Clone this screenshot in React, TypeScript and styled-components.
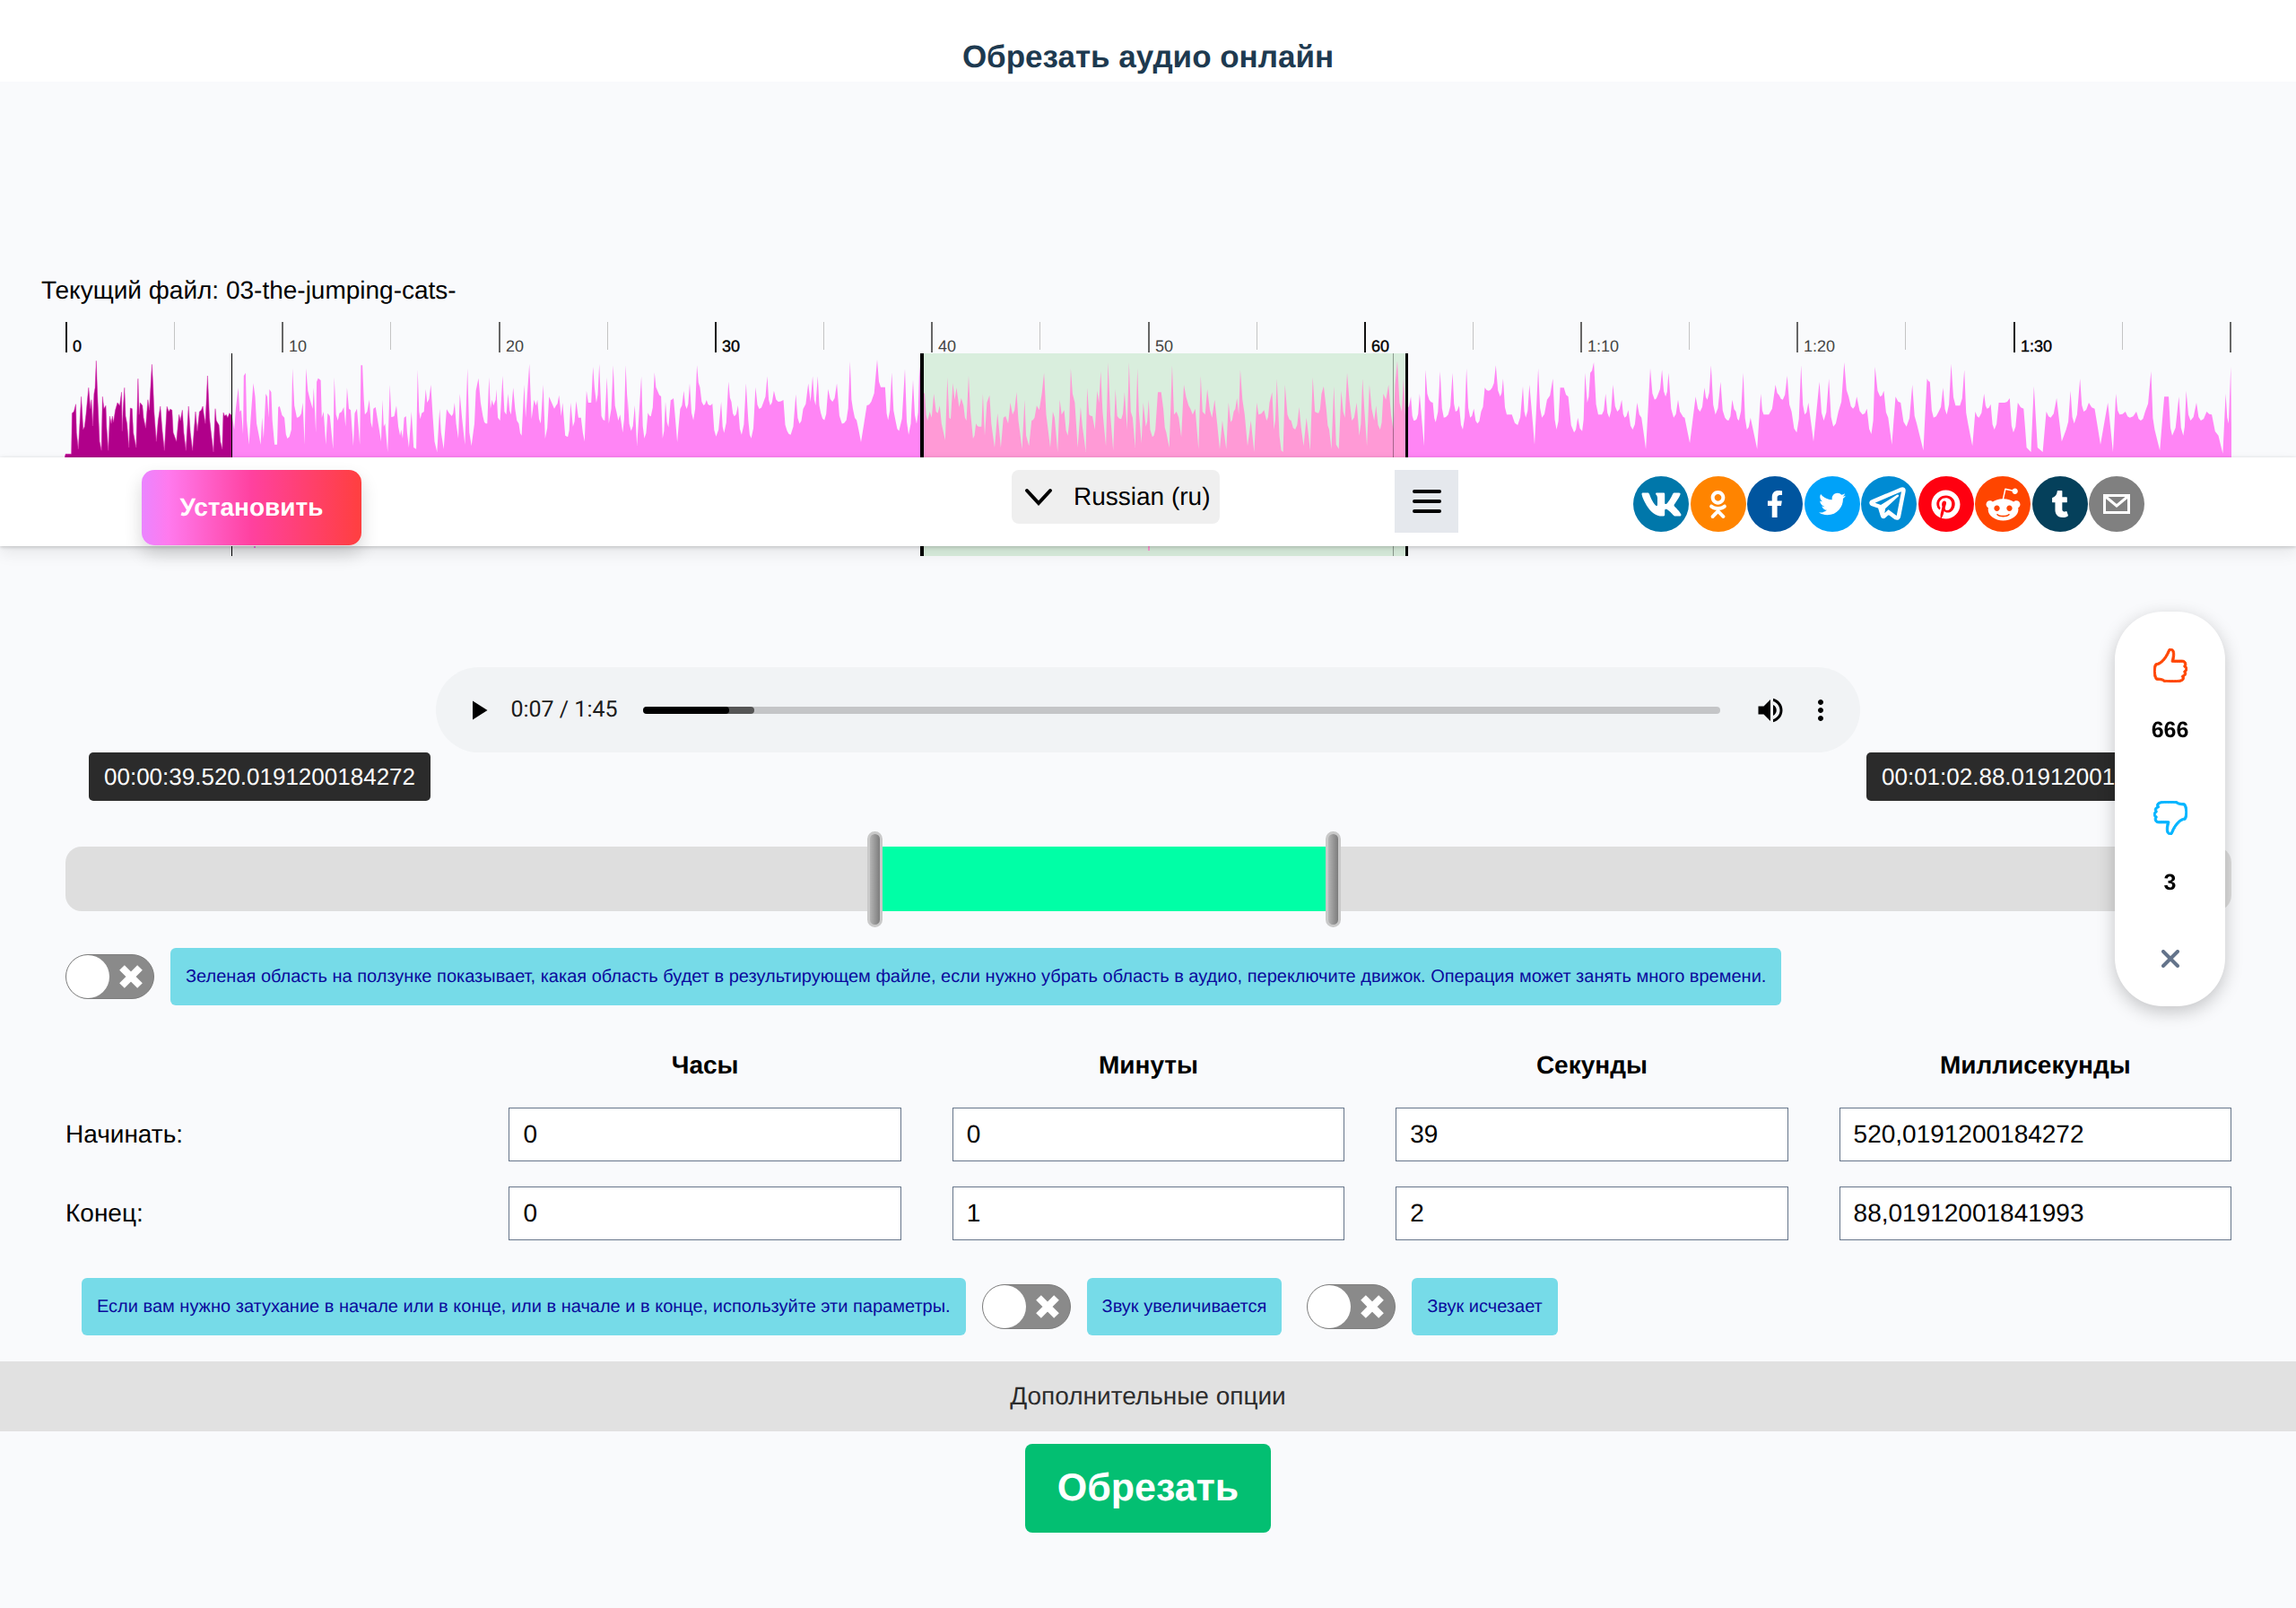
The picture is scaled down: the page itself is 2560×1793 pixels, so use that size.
import React from 'react';
import styled, { createGlobalStyle, css } from 'styled-components';
import { FaVk, FaOdnoklassniki, FaFacebookF, FaTwitter, FaPinterest, FaRedditAlien, FaTumblr } from 'react-icons/fa';
import { LiaTelegramPlane } from 'react-icons/lia';
import { MdVolumeUp, MdMoreVert, MdPlayArrow } from 'react-icons/md';
import { SlLike, SlDislike } from 'react-icons/sl';

const GlobalStyle = createGlobalStyle`
  *, *::before, *::after { box-sizing: border-box; }
  body {
    margin: 0;
    background: #f9fafc;
    color: #000;
    font-family: "Liberation Sans", Arial, sans-serif;
    font-size: 28px;
    line-height: 32px;
    text-rendering: geometricPrecision;
  }
  button, input, select { font: inherit; color: inherit; text-rendering: inherit; }
  button { cursor: pointer; }
`;

const Page = styled.div`
  padding-bottom: 82px;
`;

const TitleBar = styled.header`
  background: #fff;
  padding: 44px 24px 7px;
  text-align: center;
`;

const Title = styled.h1`
  margin: 0;
  font-size: 35px;
  line-height: 40px;
  color: #1e3a50;
`;

const FileName = styled.p`
  margin: 0;
  padding: 217px 46px 19px;
`;

const Ruler = styled.div`
  height: 35px;
  margin: 0 72px;
`;

const RulerSvg = styled.svg`
  display: block;
  width: 100%;
  height: 100%;
  overflow: visible;
  font-size: 18px;
`;

const WaveStage = styled.div`
  display: grid;
  > * { grid-area: 1 / 1; min-width: 0; }
`;

const Wave = styled.div`
  height: 226px;
  margin: 0 72px;
`;

const WaveSvg = styled.svg`
  display: block;
  width: 100%;
  height: 100%;
`;

const NavBar = styled.nav`
  z-index: 1;
  align-self: end;
  display: flex;
  align-items: flex-start;
  gap: 195px;
  height: 99px;
  margin-bottom: 11px;
  padding: 14px 169px 0 158px;
  background: #fff;
  box-shadow: 0 1px 4px rgba(0, 0, 0, 0.2), 0 8px 16px rgba(0, 0, 0, 0.08);
`;

const InstallButton = styled.button`
  width: 245px;
  height: 84px;
  margin-right: auto;
  border: 0;
  border-radius: 14px;
  background: linear-gradient(90deg, #ea85ff, #ff7aee 12%, #ff419f 50%, #ff3f3f);
  box-shadow: 0 10px 20px rgba(0, 0, 0, 0.16);
  color: #fff;
  font-weight: 700;
`;

const LanguagePicker = styled.label`
  display: grid;
  align-items: center;
  width: 232px;
  height: 60px;
  > * { grid-area: 1 / 1; }
  svg { margin-left: 14px; pointer-events: none; z-index: 1; }
`;

const LanguageSelect = styled.select`
  appearance: none;
  width: 100%;
  height: 100%;
  padding: 0 0 0 69px;
  border: 0;
  border-radius: 8px;
  background: #efefef;
`;

const MenuButton = styled.button`
  display: grid;
  place-items: center;
  width: 71px;
  height: 70px;
  padding: 0;
  border: 0;
  background: #e5e8ed;
`;

const ShareList = styled.div`
  display: flex;
  justify-content: space-between;
  width: 570px;
  padding-top: 7px;
`;

const ShareLink = styled.a<{ $color: string }>`
  display: grid;
  place-items: center;
  width: 62px;
  height: 62px;
  border-radius: 50%;
  background: ${(p) => p.$color};
  color: #fff;
`;

const Player = styled.div`
  display: flex;
  align-items: center;
  width: 62%;
  height: 95px;
  margin: 124px auto 0;
  padding: 0 26px 0 29px;
  border-radius: 48px;
  background: #f1f3f5;
`;

const PlayerButton = styled.button`
  display: grid;
  place-items: center;
  width: 36px;
  height: 40px;
  padding: 0;
  border: 0;
  background: none;
`;

const PlayerTime = styled.span`
  margin: 0 28px 0 18px;
  font-family: Roboto, sans-serif;
  font-size: 25px;
  color: #1c1c1c;
`;

const Progress = styled.div`
  display: flex;
  flex: 1;
  height: 8px;
  margin-right: 38px;
  border-radius: 4px;
  overflow: hidden;
  background: #c4c5c7;
`;

const Played = styled.div`
  width: 8%;
  border-radius: 0 4px 4px 0;
  background: #000;
  box-shadow: 28px 0 0 #555;
`;

const PlayerActions = styled.div`
  display: flex;
  gap: 20px;
`;

const TipRow = styled.div`
  display: flex;
  justify-content: space-between;
  padding: 0 98px 0 99px;
`;

const Tip = styled.output`
  padding: 12px 17px;
  border-radius: 5px;
  background: #2b2b2b;
  color: #fff;
  font-size: 26px;
  line-height: 30px;
`;

const RangeTrack = styled.div`
  display: grid;
  grid-template-columns: 894fr 17px 494fr 17px 993fr;
  align-items: center;
  height: 72px;
  margin: 51px 72px 0 73px;
  border-radius: 18px;
  background: #dedede;
`;

const RangeFill = styled.div`
  grid-column: 3;
  height: 72px;
  background: #00ffa6;
`;

const Handle = styled.button<{ $column: number }>`
  grid-column: ${(p) => p.$column};
  grid-row: 1;
  height: 107px;
  margin: -18px 0;
  padding: 0;
  border: 3px solid #c9c9c9;
  border-radius: 9px;
  background: linear-gradient(90deg, #b4b4b4, #7c7c7c);
`;

const OptionRow = styled.div`
  display: flex;
  align-items: center;
  gap: 18px;
  padding: 0 73px;
  margin-top: 41px;
`;

const FadeRow = styled.div`
  display: flex;
  align-items: center;
  gap: 18px;
  padding: 0 91px;
  margin-top: 14px;
`;

const FadeOption = styled.div`
  display: flex;
  align-items: center;
  gap: 18px;
  margin-right: 10px;
`;

const SwitchBox = styled.span`
  display: grid;
  align-items: center;
  flex: none;
  > * { grid-area: 1 / 1; }
  svg { justify-self: end; margin-right: 12px; pointer-events: none; }
`;

const SwitchInput = styled.input`
  appearance: none;
  width: 99px;
  height: 50px;
  margin: 0;
  border: 1px solid #7d7d7d;
  border-radius: 25px;
  background: #8a8a8a;
  &::before {
    content: "";
    display: block;
    width: 48px;
    height: 48px;
    border-radius: 50%;
    background: #fff;
  }
`;

const hintBox = css`
  margin: 0;
  padding: 20px 17px;
  border-radius: 6px;
  background: #76dbe8;
  color: #0a0a9c;
  font-size: 20px;
  line-height: 24px;
`;

const HintLabel = styled.label`${hintBox}`;
const HintText = styled.p`${hintBox}`;

const TimeTable = styled.table`
  width: calc(100% - 31px);
  margin: 20px 15px 0 16px;
  border-collapse: separate;
  border-spacing: 57px 28px;
  table-layout: fixed;
  th, td { padding: 0; }
  thead th { height: 38px; }
  tbody th { font-weight: 400; text-align: left; }
`;

const TimeInput = styled.input`
  display: block;
  width: 100%;
  height: 60px;
  padding: 0 15px;
  border: 1px solid #66758a;
  border-radius: 0;
  background: #fff;
`;

const MoreOptions = styled.button`
  display: block;
  width: 100%;
  height: 78px;
  margin-top: 29px;
  border: 0;
  background: #e1e1e1;
  color: #2c2c2c;
`;

const CutButton = styled.button`
  display: block;
  margin: 14px auto 0;
  padding: 25px 36px;
  border: 0;
  border-radius: 8px;
  background: #03bf72;
  color: #fff;
  font-size: 43px;
  line-height: 49px;
  font-weight: 700;
`;

const VotePanel = styled.aside`
  position: fixed;
  z-index: 2;
  top: 682px;
  right: 79px;
  display: flex;
  flex-direction: column;
  align-items: center;
  width: 123px;
  padding: 38px 0 31px;
  border-radius: 54px;
  background: #fff;
  box-shadow: 0 6px 20px rgba(0, 0, 0, 0.22);
`;

const VoteButton = styled.button<{ $color: string }>`
  display: grid;
  place-items: center;
  width: 44px;
  height: 44px;
  padding: 0;
  border: 0;
  background: none;
  color: ${(p) => p.$color};
`;

const VoteCount = styled.strong<{ $last?: boolean }>`
  margin: 34px 0 ${(p) => (p.$last ? 47 : 60)}px;
  font-size: 25px;
`;

const WAVE_A = '32,472 48,472 50,335 55,330 60,305 62,400 67,455 75,280 80,390 88,340 95,250 100,320 103,290 106,378 110,270 113,250 116,160 119,270 125,430 130,460 133,280 137,320 142,310 144,380 149,460 153,345 157,370 160,345 163,365 168,325 174,300 180,310 185,265 187,395 189,330 193,250 196,345 200,370 205,450 209,318 214,320 217,400 225,450 230,220 233,340 236,300 242,310 245,350 251,385 257,290 261,325 268,172 271,240 274,330 280,430 285,360 291,312 296,390 302,460 309,313 314,330 318,322 323,325 326,400 335,430 342,340 346,360 351,325 355,400 361,460 368,312 373,400 379,460 387,330 392,395 398,330 403,325 407,312 410,340 414,370 420,210 425,350 430,405 436,465 441,320 444,360 451,375 455,430 460,455 463,333 467,345 471,340 475,350 480,335 487,345 493,390 497,320 504,250 508,330 512,325 517,405 519,210 524,200 527,360 533,440 538,350 545,235 550,280 554,370 565,440 569,350 573,420 579,270 583,280 587,350 589,255 594,265 597,360 603,440 610,440 613,315 617,312 630,350 638,420 649,390 652,185 657,310 664,350 672,345 680,300 685,440 689,185 694,260 700,290 707,320 710,250 716,400 718,230 722,218 729,225 732,350 737,330 743,440 748,335 754,345 763,455 766,215 771,340 776,360 780,335 792,315 797,380 801,250 806,320 811,325 818,445 822,335 828,320 836,440 839,175 843,175 847,290 850,340 862,290 870,385 873,320 879,315 885,360 894,430 898,290 901,380 905,370 912,465 918,240 922,348 930,345 936,310 941,380 946,410 949,390 953,420 957,350 962,345 965,400 970,450 977,330 983,450 990,455 994,190 998,330 1001,355 1005,335 1011,330 1016,255 1020,300 1030,240 1035,340 1040,430 1047,465 1054,320 1058,400 1065,455 1073,322 1080,335 1087,345 1095,300 1099,370 1105,420 1109,270 1115,350 1123,440 1130,185 1135,400 1141,445 1149,370 1153,260 1160,218 1166,300 1172,345 1180,370 1184,370 1189,215 1193,320 1197,290 1201,310 1207,290 1209,255 1213,350 1219,360 1226,210 1231,330 1236,340 1241,270 1249,340 1255,250 1260,320 1270,370 1278,410 1285,240 1289,350 1292,300 1299,170 1305,355 1312,290 1317,310 1321,290 1330,370 1337,240 1342,420 1348,385 1353,280 1360,300 1367,320 1372,310 1380,275 1386,345 1390,300 1397,410 1404,415 1412,300 1418,380 1427,295 1433,350 1440,350 1445,400 1450,430 1455,260 1460,300 1468,300 1473,180 1477,250 1482,300 1490,170 1496,345 1505,360 1511,215 1516,370 1523,320 1528,175 1533,310 1537,330 1542,360 1547,340 1554,400 1562,175 1568,330';
const WAVE_B = '857,1080 862,1180 867,1110 870,1220 876,1030 880,1200 885,1130 889,1140 894,1020 898,1070 903,1085 905,1200 909,1100 913,1170 916,1095 920,1090 925,1210 929,1120 934,1070 938,1120 942,1050 947,1150 952,1000 956,1060 961,1110 965,1095 969,1110 973,1105 978,1195 985,1100 989,1185 995,1045 999,1100 1003,1140 1008,1110 1013,1190 1019,1050 1022,1150 1026,1200 1032,1060 1037,1120 1043,1100 1048,1030 1052,1110 1057,1070 1063,1100 1070,1095 1075,1180 1080,1190 1087,1080 1092,1160 1097,1120 1104,1050 1107,1100 1110,1030 1114,1110 1117,1030 1121,1130 1126,1150 1131,1065 1137,1100 1143,1050 1150,1160 1156,1150 1161,990 1165,1120 1170,1150 1176,1210 1184,1110 1190,1100 1198,985 1203,1060 1209,1060 1213,1150 1218,1020 1223,1150 1228,1180 1236,1010 1241,1190 1247,1040 1252,1160 1256,1000 1260,1090';
const WAVE_C = '68,150 76,180 84,270 90,240 95,260 101,180 107,240 112,245 117,220 122,280 132,335 138,125 143,260 147,265 153,145 158,200 163,160 170,225 176,195 182,220 190,270 196,120 201,240 208,330 216,280 224,290 231,290 235,180 240,320 246,210 253,185 258,280 267,360 275,245 284,360 291,260 297,255 304,280 310,210 316,250 327,175 332,270 342,365 349,200 353,320 361,355 368,270 376,260 382,220 389,235 396,180 402,110 408,250 419,360 426,240 431,260 439,375 445,200 450,250 457,235 467,320 475,95 480,180 486,210 494,360 502,225 507,290 516,375 520,160 525,250 534,255 541,300 547,170 552,210 557,105 562,240 571,355 577,75 583,250 591,370 597,165 602,255 613,265 622,175 629,300 634,75 639,240 644,260 651,360 657,95 661,240 668,345 673,210 680,290 688,200 692,300 698,325 706,300 713,175 722,175 728,230 736,310 744,360 752,85 757,250 764,240 770,260 777,325 784,150 790,190 797,220 802,230 808,250 815,230 824,365 830,120 835,240 842,250 848,165 855,235 861,260 868,200 875,280 882,365 889,270 900,365 906,210 912,275 920,240 929,195 934,250 938,100 944,200 950,250 958,355 967,270 976,375 983,210 988,250 1003,235 1010,270 1018,210 1025,175 1030,300 1038,130 1045,320 1050,370 1055,375 1060,150 1067,250 1077,270 1088,300 1099,225 1104,290 1111,355 1119,260 1129,370 1136,125 1142,240 1152,245 1160,180 1166,155 1173,230 1181,300 1187,365 1194,155 1200,350 1207,365 1214,170 1219,240 1224,260 1230,110 1236,200 1243,270 1249,260 1256,210 1263,320 1272,130 1277,230 1284,355 1291,150 1297,230 1304,270 1309,220 1320,300 1329,180 1336,200 1343,150 1350,250 1356,300 1361,150 1367,70 1373,210 1379,240 1384,130 1389,250 1396,300';
const WAVE_D = '354,470 359,430 363,510 367,505 371,420 377,595 379,340 384,440 389,450 393,515 399,345 404,500 410,490 416,350 420,480 425,460 430,540 435,335 440,500 445,470 450,520 455,480 460,400 465,410 470,400 475,325 481,430 485,370 490,490 497,490 505,525 512,395 516,500 521,390 528,590 533,335 538,500 545,440 553,370 558,540 563,400 568,400 574,430 582,550 587,500 593,545 597,350 600,450 604,350 609,315 615,490 620,490 625,420 630,500 635,390 641,480 647,440 651,500 656,475 662,540 668,450 674,500 680,605 686,335 692,440 697,420 702,340 707,430 711,350 718,500 724,440 729,490 733,500 740,585 748,430 754,480 760,400 764,440 769,325 775,490 782,380 788,500 793,510 798,440 803,480 807,510 813,350 818,540 823,500 832,605 837,420 841,490 848,490 857,390 862,425 867,440 873,360 879,480 886,550 892,325 897,490 902,450 909,580 917,380 923,510 930,370 936,530 943,480 951,315 957,430 963,470 968,430 976,490 982,470 988,555 993,330 1000,430 1005,410 1011,500 1016,590 1021,430 1028,450 1036,530 1044,390 1050,520 1059,610 1064,370 1068,380 1073,500 1080,480 1086,400 1091,490 1097,320 1103,460 1109,460 1115,340 1120,520 1126,595 1130,480 1135,500 1142,420 1146,470 1151,455 1156,540 1162,450 1170,450 1177,435 1182,550 1188,450 1196,470 1200,600 1206,615 1210,395 1215,600 1222,615 1227,480 1233,500 1241,435 1248,580 1254,540 1260,410 1265,520 1273,370 1278,480 1285,450 1293,470 1301,590 1311,450 1318,615 1322,420 1327,490 1335,480 1341,500 1350,480 1356,510 1362,480 1370,345 1375,540 1382,610 1388,430 1394,430 1399,560 1408,430 1414,560 1418,410 1424,510 1432,450 1438,510 1446,480 1453,490 1462,560 1468,620 1472,420 1476,520 1479,330 1480,600';

// Each stretch of peaks has its own recording grid: origin and scale.
const segments = [
  { points: WAVE_A, x: -12, y: -45, sx: 2.45, sy: 3 },
  { points: WAVE_B, x: -72, y: -395, sx: 1.225, sy: 2.45 },
  { points: WAVE_C, x: 928, y: -15, sx: 2.45, sy: 3 },
  { points: WAVE_D, x: 1208, y: -95, sx: 1.225, sy: 3 },
];

const peaks = segments.flatMap((s) =>
  s.points.split(' ').map((pair) => {
    const [px, py] = pair.split(',').map(Number);
    return [s.x + px / s.sx, Math.min(s.y + py / s.sy, 116)];
  }),
);

// Peaks taper: halfway to a neighbour the level is already near the quieter one.
const tapered = peaks.flatMap(([x, y], i) => {
  const next = peaks[i + 1];
  if (!next || next[0] - x < 3) return [[x, y]];
  const loud = Math.min(y, next[1]);
  const quiet = Math.max(y, next[1]);
  const level = quiet > 95 ? (loud + quiet) / 2 : loud * 0.2 + quiet * 0.8;
  return [[x, y], [(x + next[0]) / 2, level]];
});

const wavePath = `M0,117 ${tapered.map(([x, y]) => `L${x.toFixed(1)},${y.toFixed(1)}`).join(' ')} L2416,117 Z`;

const WaveForm = () => (
  <WaveSvg viewBox="0 0 2416 226" preserveAspectRatio="none" role="img" aria-label="Форма волны">
    <defs>
      <clipPath id="played"><rect x="0" y="0" width="187" height="226" /></clipPath>
      <clipPath id="region"><rect x="958" y="0" width="538" height="226" /></clipPath>
    </defs>
    <path d={wavePath} fill="#ff85f5" />
    <path d={wavePath} fill="#b0008a" stroke="#d63cae" strokeWidth="0.5" clipPath="url(#played)" />
    <rect x="956" y="0" width="542" height="226" fill="#d9eedd" />
    <path d={wavePath} fill="#ff9ad6" clipPath="url(#region)" />
    <rect x="186" y="0" width="1" height="226" fill="#000" />
    <rect x="954" y="0" width="4" height="226" fill="#000" />
    <rect x="1481" y="0" width="1" height="226" fill="#000" opacity="0.35" />
    <rect x="1495" y="0" width="3" height="226" fill="#000" />
    <rect x="1208" y="206" width="2" height="14" fill="#ff9ad6" />
    <rect x="211" y="206" width="2" height="11" fill="#ff85f5" />
  </WaveSvg>
);

const rulerLabels = ['0', '10', '20', '30', '40', '50', '60', '1:10', '1:20', '1:30', ''];

const TimeRuler = () => (
  <RulerSvg viewBox="0 0 2416 35" aria-hidden="true">
    {rulerLabels.map((label, i) => {
      const x = Math.round(1 + i * 241.3);
      const strong = i % 3 === 0;
      return (
        <g key={i}>
          <rect x={x} y="0" width="2" height="34" fill={strong ? '#111' : '#666'} />
          {i < 10 && <rect x={x + 121} y="0" width="1" height="31" fill="#c4c4c4" />}
          {label && (
            <text x={x + 8} y="33" fill={strong ? '#000' : '#444'} stroke={strong ? '#000' : 'none'} strokeWidth="0.4">{label}</text>
          )}
        </g>
      );
    })}
  </RulerSvg>
);

const EnvelopeIcon = () => (
  <svg width="30" height="22" viewBox="0 0 30 22" fill="none" stroke="currentColor" strokeWidth="3">
    <path d="M1.5 1.5 H28.5 V20.5 H1.5 Z M3 3 L15 13 L27 3" />
  </svg>
);

const shares = [
  { name: 'VK', color: '#0077aa', Icon: FaVk, size: 47 },
  { name: 'Odnoklassniki', color: '#ff8400', Icon: FaOdnoklassniki, size: 31 },
  { name: 'Facebook', color: '#00559f', Icon: FaFacebookF, size: 30 },
  { name: 'Twitter', color: '#00a2f9', Icon: FaTwitter, size: 30 },
  { name: 'Telegram', color: '#008bd3', Icon: LiaTelegramPlane, size: 48, stroke: 1 },
  { name: 'Pinterest', color: '#ff0010', Icon: FaPinterest, size: 33 },
  { name: 'Reddit', color: '#ff4500', Icon: FaRedditAlien, size: 41 },
  { name: 'Tumblr', color: '#05405b', Icon: FaTumblr, size: 30 },
  { name: 'Email', color: '#808080', Icon: EnvelopeIcon, size: 30 },
];

const Switch = ({ id }: { id: string }) => (
  <SwitchBox>
    <SwitchInput type="checkbox" role="switch" id={id} />
    <svg width="28" height="28" viewBox="0 0 28 28" stroke="#fff" strokeWidth="8">
      <path d="M4 4 L24 24 M24 4 L4 24" />
    </svg>
  </SwitchBox>
);

const units = ['Часы', 'Минуты', 'Секунды', 'Миллисекунды'];
const times = [
  { label: 'Начинать:', values: ['0', '0', '39', '520,0191200184272'] },
  { label: 'Конец:', values: ['0', '1', '2', '88,01912001841993'] },
];

export default function App() {
  return (
    <>
      <GlobalStyle />
      <Page>
        <TitleBar><Title>Обрезать аудио онлайн</Title></TitleBar>
        <main>
          <FileName>Текущий файл: 03-the-jumping-cats-</FileName>
          <Ruler><TimeRuler /></Ruler>
          <WaveStage>
            <Wave><WaveForm /></Wave>
            <NavBar>
              <InstallButton>Установить</InstallButton>
              <LanguagePicker>
                <LanguageSelect aria-label="Язык"><option>Russian (ru)</option></LanguageSelect>
                <svg width="32" height="20" viewBox="0 0 32 20" fill="none" stroke="#000" strokeWidth="4" strokeLinecap="round">
                  <path d="M3 3 L16 17 L29 3" />
                </svg>
              </LanguagePicker>
              <MenuButton aria-label="Меню">
                <svg width="34" height="26" viewBox="0 0 34 26" stroke="#000" strokeWidth="4" strokeLinecap="round">
                  <path d="M3 2 H31 M3 13 H31 M3 24 H31" />
                </svg>
              </MenuButton>
              <ShareList>
                {shares.map(({ name, color, Icon, size, stroke }) => (
                  <ShareLink key={name} href="#" aria-label={name} $color={color}>
                    <Icon size={size} stroke="currentColor" strokeWidth={stroke ?? 0} />
                  </ShareLink>
                ))}
              </ShareList>
            </NavBar>
          </WaveStage>

          <Player>
            <PlayerButton aria-label="Воспроизвести"><MdPlayArrow size={36} /></PlayerButton>
            <PlayerTime>0:07 / 1:45</PlayerTime>
            <Progress><Played /></Progress>
            <PlayerActions>
              <PlayerButton aria-label="Звук"><MdVolumeUp size={36} /></PlayerButton>
              <PlayerButton aria-label="Ещё"><MdMoreVert size={36} /></PlayerButton>
            </PlayerActions>
          </Player>

          <TipRow>
            <Tip>00:00:39.520.0191200184272</Tip>
            <Tip>00:01:02.88.01912001841993</Tip>
          </TipRow>
          <RangeTrack>
            <RangeFill />
            <Handle $column={2} aria-label="Начало" />
            <Handle $column={4} aria-label="Конец" />
          </RangeTrack>

          <OptionRow>
            <Switch id="invert" />
            <HintLabel htmlFor="invert">Зеленая область на ползунке показывает, какая область будет в результирующем файле, если нужно убрать область в аудио, переключите движок. Операция может занять много времени.</HintLabel>
          </OptionRow>

          <TimeTable>
            <thead>
              <tr><td />{units.map((u) => <th key={u} scope="col">{u}</th>)}</tr>
            </thead>
            <tbody>
              {times.map((row) => (
                <tr key={row.label}>
                  <th scope="row">{row.label}</th>
                  {row.values.map((v, i) => (
                    <td key={i}><TimeInput defaultValue={v} aria-label={`${row.label} ${units[i]}`} /></td>
                  ))}
                </tr>
              ))}
            </tbody>
          </TimeTable>

          <FadeRow>
            <HintText>Если вам нужно затухание в начале или в конце, или в начале и в конце, используйте эти параметры.</HintText>
            <FadeOption><Switch id="fadein" /><HintLabel htmlFor="fadein">Звук увеличивается</HintLabel></FadeOption>
            <FadeOption><Switch id="fadeout" /><HintLabel htmlFor="fadeout">Звук исчезает</HintLabel></FadeOption>
          </FadeRow>

          <MoreOptions>Дополнительные опции</MoreOptions>
          <CutButton>Обрезать</CutButton>
        </main>
        <VotePanel>
          <VoteButton $color="#ff4500" aria-label="Нравится"><SlLike size={38} stroke="currentColor" strokeWidth="24" /></VoteButton>
          <VoteCount>666</VoteCount>
          <VoteButton $color="#00b4ff" aria-label="Не нравится"><SlDislike size={38} stroke="currentColor" strokeWidth="24" /></VoteButton>
          <VoteCount $last>3</VoteCount>
          <VoteButton $color="#64748b" aria-label="Закрыть">
            <svg width="20" height="20" viewBox="0 0 20 20" stroke="currentColor" strokeWidth="4" strokeLinecap="round">
              <path d="M2 2 L18 18 M18 2 L2 18" />
            </svg>
          </VoteButton>
        </VotePanel>
      </Page>
    </>
  );
}
